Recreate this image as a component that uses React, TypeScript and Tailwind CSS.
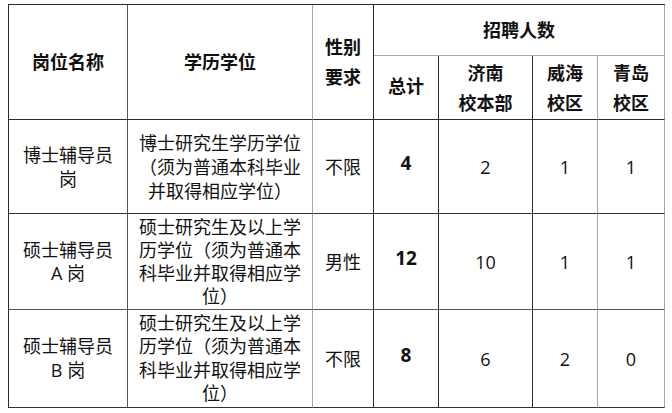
const dark = "border-[#2b2b2b]";

type Row = {
  name: string[];
  edu: string[];
  gender: string;
  total: number;
  jinan: number;
  weihai: number;
  qingdao: number;
  h: string;
  lead: string;
  bottom: string;
};

const rows: Row[] = [
  {
    name: ["博士辅导员", "岗"],
    edu: ["博士研究生学历学位", "（须为普通本科毕业", "并取得相应学位）"],
    gender: "不限",
    total: 4,
    jinan: 2,
    weihai: 1,
    qingdao: 1,
    h: "h-[94px]",
    lead: "leading-[24px]",
    bottom: "border-b-[#333]",
  },
  {
    name: ["硕士辅导员", "A 岗"],
    edu: ["硕士研究生及以上学", "历学位（须为普通本", "科毕业并取得相应学", "位）"],
    gender: "男性",
    total: 12,
    jinan: 10,
    weihai: 1,
    qingdao: 1,
    h: "h-[96px]",
    lead: "leading-[23px]",
    bottom: "border-b-[#555]",
  },
  {
    name: ["硕士辅导员", "B 岗"],
    edu: ["硕士研究生及以上学", "历学位（须为普通本", "科毕业并取得相应学", "位）"],
    gender: "不限",
    total: 8,
    jinan: 6,
    weihai: 2,
    qingdao: 0,
    h: "h-[98px]",
    lead: "leading-[23.5px]",
    bottom: "border-b-[#333]",
  },
];

const Lines = ({ lines }: { lines: string[] }) => (
  <>
    {lines.map((l, i) => (
      <div key={i} className="whitespace-nowrap">
        {l}
      </div>
    ))}
  </>
);

export default function App() {
  return (
    <div className="w-[672px] h-[413px] bg-white pt-[4px] pl-[8px] font-['Open_Sans','Noto_Sans_CJK_SC',sans-serif] text-[#111] text-[18px]">
      <table className={`table-fixed border-separate border-spacing-0 w-[657px] border-t border-l ${dark}`}>
        <colgroup>
          <col className="w-[119px]" />
          <col className="w-[185px]" />
          <col className="w-[61px]" />
          <col className="w-[65px]" />
          <col className="w-[94px]" />
          <col className="w-[65px]" />
          <col className="w-[67px]" />
        </colgroup>
        <thead>
          <tr className="h-[51px]">
            <th rowSpan={2} className="border-r border-b border-r-[#555] border-b-[#2b2b2b] font-bold text-center align-middle leading-[24px]">
              岗位名称
            </th>
            <th rowSpan={2} className="border-r border-b border-r-[#a8a8a8] border-b-[#2b2b2b] font-bold text-center align-middle leading-[24px]">
              学历学位
            </th>
            <th rowSpan={2} className={`border-r border-b ${dark} font-bold text-center align-middle leading-[30px]`}>
              <div>性别</div>
              <div>要求</div>
            </th>
            <th colSpan={4} className="border-r border-b border-r-[#a8a8a8] border-b-[#a8a8a8] font-bold text-center align-middle leading-[24px]">
              招聘人数
            </th>
          </tr>
          <tr className="h-[64px]">
            <th className={`border-r border-b ${dark} font-bold text-center align-middle leading-[24px] pb-[4px]`}>总计</th>
            <th className={`border-r border-b ${dark} font-bold text-center align-middle leading-[30px]`}>
              <div>济南</div>
              <div>校本部</div>
            </th>
            <th className="border-r border-b border-r-[#a8a8a8] border-b-[#2b2b2b] font-bold text-center align-middle leading-[30px]">
              <div>威海</div>
              <div>校区</div>
            </th>
            <th className="border-r border-b border-r-[#a8a8a8] border-b-[#2b2b2b] font-bold text-center align-middle leading-[30px]">
              <div>青岛</div>
              <div>校区</div>
            </th>
          </tr>
        </thead>
        <tbody>
          {rows.map((r, i) => (
            <tr key={i} className={r.h}>
              <td className={`border-r border-b border-r-[#555] ${r.bottom} text-center align-middle ${r.lead}`}>
                <Lines lines={r.name} />
              </td>
              <td className={`border-r border-b border-r-[#a8a8a8] ${r.bottom} text-center align-middle ${r.lead}`}>
                <Lines lines={r.edu} />
              </td>
              <td className={`border-r border-b border-r-[#2b2b2b] ${r.bottom} text-center align-middle leading-[24px]`}>
                {r.gender}
              </td>
              <td className={`border-r border-b border-r-[#2b2b2b] ${r.bottom} text-center align-middle font-bold text-[19px] leading-[24px] pb-[8px]`}>
                {r.total}
              </td>
              <td className={`border-r border-b border-r-[#2b2b2b] ${r.bottom} text-center align-middle leading-[24px]`}>
                {r.jinan}
              </td>
              <td className={`border-r border-b border-r-[#a8a8a8] ${r.bottom} text-center align-middle leading-[24px]`}>
                {r.weihai}
              </td>
              <td className={`border-r border-b border-r-[#a8a8a8] ${r.bottom} text-center align-middle leading-[24px]`}>
                {r.qingdao}
              </td>
            </tr>
          ))}
        </tbody>
      </table>
    </div>
  );
}
